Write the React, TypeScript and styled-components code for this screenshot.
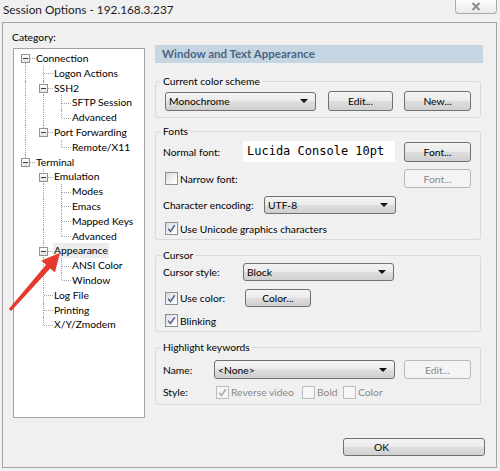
import React from "react";
import styled, { createGlobalStyle } from "styled-components";

const GlobalStyle = createGlobalStyle`
  html, body { margin: 0; padding: 0; background: #f0f0f0; }
  body { font-family: Lato, "Noto Sans", sans-serif; font-size: 10.3px; color: #000; }
  * { box-sizing: border-box; }
`;

const Window = styled.div`
  position: relative;
  width: 500px;
  height: 471px;
  overflow: hidden;
  background: #f0f0f0;
  display: flex;
  flex-direction: column;
`;

const TitleBar = styled.div`
  height: 22px;
  display: flex;
  align-items: flex-start;
  padding: 0 3px 0 3px;
  flex: none;
`;

const Title = styled.div`
  font-size: 11.8px;
  line-height: 18px;
  color: #1b1b1b;
  padding-top: 1px;
`;

const CloseButton = styled.div`
  margin-left: auto;
  width: 42px;
  height: 14px;
  border: 1px solid #a9a9a9;
  border-top: none;
  border-radius: 0 0 4px 4px;
  background: linear-gradient(#fdfdfd, #ebebeb);
  display: flex;
  align-items: center;
  justify-content: center;
`;

const Panel = styled.div`
  margin: 0 3px 3px 2px;
  height: 446px;
  border: 1px solid #a5a5a5;
  display: grid;
  grid-template-columns: 132px 1fr;
  column-gap: 10px;
  align-items: start;
  padding: 7px 13px 0 10px;
`;

const LeftColumn = styled.div`
  display: flex;
  flex-direction: column;
`;

const CategoryLabel = styled.div`
  line-height: 14px;
  margin: 0 0 4px -1px;
`;

const Tree = styled.div`
  width: 132px;
  height: 370px;
  border: 1px solid #a3a3a3;
  background: #fff;
  padding: 2px 0 0 2px;
`;

const TreeRow = styled.div`
  height: 14.8px;
  display: flex;
  align-items: stretch;
`;

const LINE = "1px dotted #a2a2a2";

const Cell = styled.span<{ $up?: boolean; $down?: boolean; $right?: boolean }>`
  position: relative;
  width: 18px;
  flex: none;
  &::before {
    content: "";
    position: absolute;
    left: 9px;
    width: 0;
    top: ${(p) => (p.$up ? "0" : "50%")};
    bottom: ${(p) => (p.$down ? "0" : "50%")};
    border-left: ${(p) => (p.$up || p.$down ? LINE : "none")};
  }
  &::after {
    content: "";
    position: absolute;
    left: 10px;
    right: -1px;
    top: 50%;
    border-top: ${(p) => (p.$right ? LINE : "none")};
  }
`;

const Expander = styled.span`
  position: absolute;
  z-index: 1;
  left: 5px;
  top: calc(50% - 4px);
  width: 9px;
  height: 9px;
  border: 1px solid #939393;
  background: linear-gradient(#ffffff, #e2e2e2);
  &::before {
    content: "";
    position: absolute;
    left: 1px;
    right: 1px;
    top: 3px;
    height: 1px;
    background: #3b3b3b;
  }
`;

const NodeText = styled.span<{ $selected?: boolean }>`
  margin-left: 1px;
  padding: 0 1px;
  line-height: 14.8px;
  white-space: nowrap;
  background: ${(p) => (p.$selected ? "#ececec" : "transparent")};
`;

const RightColumn = styled.div`
  display: flex;
  flex-direction: column;
  padding-top: 15px;
`;

const Banner = styled.div`
  height: 18px;
  line-height: 18px;
  background: #c6d5e2;
  color: #4a6683;
  font-weight: bold;
  font-size: 11.5px;
  padding-left: 7px;
`;

const Group = styled.fieldset<{ $mt: number; $pt: number; $pb: number }>`
  margin: ${(p) => p.$mt}px 2px 0 0;
  padding: ${(p) => p.$pt}px 9px ${(p) => p.$pb}px 7px;
  border: 1px solid #d9d9d9;
  border-radius: 3px;
  min-width: 0;
  display: flex;
  flex-direction: column;
`;

const Legend = styled.legend`
  padding: 0 2px;
  margin-left: -2px;
  line-height: 12px;
  font-size: 10.3px;
`;

const Row = styled.div<{ $h: number; $mt?: number }>`
  display: flex;
  align-items: center;
  height: ${(p) => p.$h}px;
  margin-top: ${(p) => p.$mt ?? 0}px;
`;

const Label = styled.span<{ $w: number }>`
  width: ${(p) => p.$w}px;
  flex: none;
  white-space: nowrap;
`;

const Button = styled.div<{ $w: number; $h: number; $ml?: number; $disabled?: boolean }>`
  width: ${(p) => p.$w}px;
  height: ${(p) => p.$h}px;
  margin-left: ${(p) => p.$ml ?? 0}px;
  flex: none;
  border: 1px solid ${(p) => (p.$disabled ? "#b5b9bc" : "#707070")};
  border-radius: 3px;
  background: ${(p) =>
    p.$disabled
      ? "#f4f4f4"
      : "linear-gradient(#f3f3f3 0%, #ebebeb 48%, #dddddd 52%, #d0d0d0 100%)"};
  color: ${(p) => (p.$disabled ? "#8a8a8a" : "#000")};
  display: flex;
  align-items: center;
  justify-content: center;
  white-space: nowrap;
`;

const PushRight = styled.span`
  margin-left: auto;
`;

const OkButton = styled(Button)`
  justify-content: flex-start;
  padding-left: 30px;
  align-self: flex-end;
  margin-right: -2px;
  margin-top: 33px;
`;

const Combo = styled.div<{ $w: number; $h: number; $ml?: number }>`
  width: ${(p) => p.$w}px;
  height: ${(p) => p.$h}px;
  margin-left: ${(p) => p.$ml ?? 0}px;
  flex: none;
  border: 1px solid #707070;
  border-radius: 3px;
  background: linear-gradient(#f3f3f3 0%, #ebebeb 48%, #dddddd 52%, #d0d0d0 100%);
  display: flex;
  align-items: center;
  padding: 0 7px 0 3px;
  white-space: nowrap;
`;

const Arrow = styled.span`
  margin-left: auto;
  width: 0;
  height: 0;
  border-left: 4px solid transparent;
  border-right: 4px solid transparent;
  border-top: 4px solid #111;
`;

const FontBox = styled.div`
  width: 152px;
  height: 21px;
  flex: none;
  background: #fff;
  font-family: "DejaVu Sans Mono", "Liberation Mono", monospace;
  font-size: 12px;
  line-height: 21px;
  padding-left: 4px;
  white-space: nowrap;
`;

const CheckItem = styled.span<{ $w?: number; $ml?: number; $disabled?: boolean }>`
  display: inline-flex;
  align-items: center;
  flex: none;
  width: ${(p) => (p.$w ? `${p.$w}px` : "auto")};
  margin-left: ${(p) => p.$ml ?? 2}px;
  color: ${(p) => (p.$disabled ? "#8a8a8a" : "#000")};
  white-space: nowrap;
`;

const Box = styled.span<{ $disabled?: boolean }>`
  width: 13px;
  height: 13px;
  flex: none;
  margin-right: 2px;
  border: 1px solid ${(p) => (p.$disabled ? "#bdbdbd" : "#8e8f8f")};
  background: ${(p) =>
    p.$disabled ? "#f6f6f6" : "linear-gradient(135deg, #dadada 0%, #f4f4f4 60%, #ffffff 100%)"};
  display: inline-flex;
  align-items: center;
  justify-content: center;
`;

const ArrowOverlay = styled.svg`
  position: absolute;
  left: 0;
  top: 0;
  pointer-events: none;
`;

const CheckBox: React.FC<{ checked?: boolean; disabled?: boolean; label: string; w?: number; ml?: number }> = ({
  checked,
  disabled,
  label,
  w,
  ml,
}) => (
  <CheckItem $w={w} $ml={ml} $disabled={disabled}>
    <Box $disabled={disabled}>
      {checked && (
        <svg width="11" height="11" viewBox="0 0 11 11">
          <path
            d="M2.2 5.6 L4.4 8.4 L8.8 2.2"
            fill="none"
            stroke={disabled ? "#a8a8a8" : "#4b5f92"}
            strokeWidth="1.5"
          />
        </svg>
      )}
    </Box>
    {label}
  </CheckItem>
);

type Node = { label: string; selected?: boolean; children?: Node[] };

const treeData: Node[] = [
  {
    label: "Connection",
    children: [
      { label: "Logon Actions" },
      { label: "SSH2", children: [{ label: "SFTP Session" }, { label: "Advanced" }] },
      { label: "Port Forwarding", children: [{ label: "Remote/X11" }] },
    ],
  },
  {
    label: "Terminal",
    children: [
      {
        label: "Emulation",
        children: [{ label: "Modes" }, { label: "Emacs" }, { label: "Mapped Keys" }, { label: "Advanced" }],
      },
      { label: "Appearance", selected: true, children: [{ label: "ANSI Color" }, { label: "Window" }] },
      { label: "Log File" },
      { label: "Printing" },
      { label: "X/Y/Zmodem" },
    ],
  },
];

type FlatRow = {
  label: string;
  selected?: boolean;
  hasChildren: boolean;
  isLast: boolean;
  firstRoot: boolean;
  guides: boolean[];
};

function flatten(nodes: Node[], guides: boolean[], out: FlatRow[]) {
  nodes.forEach((n, i) => {
    const isLast = i === nodes.length - 1;
    out.push({
      label: n.label,
      selected: n.selected,
      hasChildren: !!n.children,
      isLast,
      firstRoot: guides.length === 0 && i === 0,
      guides,
    });
    if (n.children) flatten(n.children, [...guides, !isLast], out);
  });
  return out;
}

const rows = flatten(treeData, [], []);

export default function App() {
  return (
    <Window>
      <GlobalStyle />
      <TitleBar>
        <Title>Session Options - 192.168.3.237</Title>
        <CloseButton>
          <svg width="10" height="9" viewBox="0 0 10 9">
            <path d="M1.5 1 L8.5 8 M8.5 1 L1.5 8" stroke="#8c8c8c" strokeWidth="2" fill="none" />
          </svg>
        </CloseButton>
      </TitleBar>
      <Panel>
        <LeftColumn>
          <CategoryLabel>Category:</CategoryLabel>
          <Tree>
            {rows.map((r, idx) => (
              <TreeRow key={idx}>
                {r.guides.map((g, j) => (
                  <Cell key={j} $up={g} $down={g} />
                ))}
                <Cell $up={!r.firstRoot} $down={!r.isLast} $right>
                  {r.hasChildren && <Expander />}
                </Cell>
                <NodeText $selected={r.selected}>{r.label}</NodeText>
              </TreeRow>
            ))}
          </Tree>
        </LeftColumn>
        <RightColumn>
          <Banner>Window and Text Appearance</Banner>
          <Group $mt={12} $pt={4} $pb={6}>
            <Legend>Current color scheme</Legend>
            <Row $h={20}>
              <Combo $w={151} $h={19} $ml={2}>
                Monochrome
                <Arrow />
              </Combo>
              <Button $w={65} $h={20} $ml={12}>
                Edit...
              </Button>
              <Button $w={67} $h={20} $ml={11}>
                New...
              </Button>
            </Row>
          </Group>
          <Group $mt={7} $pt={4} $pb={4}>
            <Legend>Fonts</Legend>
            <Row $h={21}>
              <Label $w={80}>Normal font:</Label>
              <FontBox>Lucida Console 10pt</FontBox>
              <Button $w={67} $h={20} $ml={9}>
                Font...
              </Button>
            </Row>
            <Row $h={19} $mt={7}>
              <CheckBox label="Narrow font:" />
              <PushRight />
              <Button $w={67} $h={19} $disabled>
                Font...
              </Button>
            </Row>
            <Row $h={18} $mt={8}>
              <Label $w={101}>Character encoding:</Label>
              <Combo $w={132} $h={18}>
                UTF-8
                <Arrow />
              </Combo>
            </Row>
            <Row $h={13} $mt={8}>
              <CheckBox checked label="Use Unicode graphics characters" />
            </Row>
          </Group>
          <Group $mt={9} $pt={2} $pb={4}>
            <Legend>Cursor</Legend>
            <Row $h={18}>
              <Label $w={80}>Cursor style:</Label>
              <Combo $w={151} $h={18}>
                Block
                <Arrow />
              </Combo>
            </Row>
            <Row $h={18} $mt={8}>
              <CheckBox checked label="Use color:" w={80} />
              <Button $w={66} $h={18}>
                Color...
              </Button>
            </Row>
            <Row $h={13} $mt={7}>
              <CheckBox checked label="Blinking" />
            </Row>
          </Group>
          <Group $mt={9} $pt={7} $pb={5}>
            <Legend>Highlight keywords</Legend>
            <Row $h={19}>
              <Label $w={51}>Name:</Label>
              <Combo $w={181} $h={19}>
                &lt;None&gt;
                <Arrow />
              </Combo>
              <Button $w={67} $h={19} $ml={9} $disabled>
                Edit...
              </Button>
            </Row>
            <Row $h={14} $mt={6}>
              <Label $w={51}>Style:</Label>
              <CheckBox checked disabled label="Reverse video" w={84} />
              <CheckBox disabled label="Bold" w={39} ml={2} />
              <CheckBox disabled label="Color" ml={2} />
            </Row>
          </Group>
          <OkButton $w={142} $h={18}>
            OK
          </OkButton>
        </RightColumn>
      </Panel>
      <ArrowOverlay width="500" height="471" viewBox="0 0 500 471">
        <polygon
          points="60,253 54.9,272.4 50.2,268.4 11.2,311.1 8.8,308.9 46,264.7 41.3,260.6"
          fill="#e53b2f"
        />
      </ArrowOverlay>
    </Window>
  );
}
